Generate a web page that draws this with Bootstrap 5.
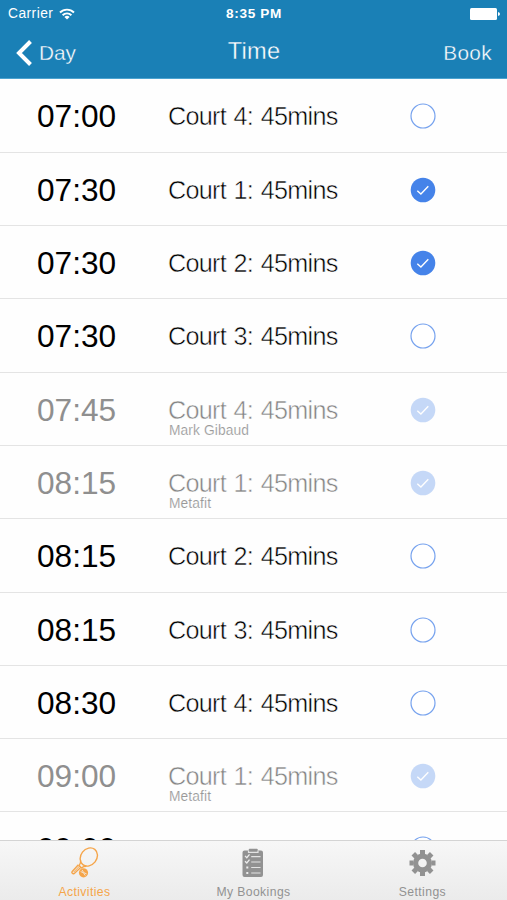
<!DOCTYPE html>
<html lang="en">
<head>
<meta charset="utf-8">
<meta name="viewport" content="width=device-width, initial-scale=1">
<title>Time</title>
<link href="https://cdn.jsdelivr.net/npm/bootstrap@5.3.0/dist/css/bootstrap.min.css" rel="stylesheet">
<style>
  body { font-family: "Liberation Sans", Arial, sans-serif; background: #fefefe; color: #000; }
  .screen { height: 900px; width: 507px; }
  .top { height: 79px; background: #1a80b6; color: #fff; border-bottom: 1px solid #4ba3d0; }
  .status { height: 27px; font-size: 13.8px; line-height: 27px; padding: 0 7px 0 8px; letter-spacing: .45px; }
  .status .clock { font-weight: 700; font-size: 13.6px; letter-spacing: .65px; }
  .wifi { margin-left: 6px; }
  .bar { height: 51px; padding: 0 15px 0 16px; line-height: 51px; font-size: 20.8px; }
  .bar-title { font-size: 23.6px; letter-spacing: .3px; padding-bottom: 2px; line-height: 49px; }
  .bar-back { margin-left: 7px; }
  .bar-book { letter-spacing: .35px; }
  .thin { -webkit-text-stroke: .35px #1a80b6; }
  .slots { min-height: 0; }
  .slot { height: 73.3px; flex: none; border-bottom: 1px solid #e4e4e4; padding-left: 37px; }
  .slot:first-child { height: 73.8px; }
  .slot-time { width: 132px; font-size: 31.6px; line-height: 73px; padding-top: 1px; }
  .slot-info { width: 241px; padding-top: 24px; }
  .slot-name { font-size: 25.2px; line-height: 27px; letter-spacing: -.72px; word-spacing: 1.3px; margin-left: -1px; -webkit-text-stroke: .5px #fefefe; }
  .slot-who { font-size: 13.8px; line-height: 14px; margin-top: 0; letter-spacing: .1px; color: #999; -webkit-text-stroke: .15px #fefefe; }
  .slot-mark { width: 26px; height: 26px; margin-top: 24px; }
  .taken { color: #8f8f8f; }
  .taken .slot-name { color: #848484; }
  .taken .slot-mark { opacity: .3; }
  .tabs { height: 60px; flex: none; border-top: 1px solid #d4d4d4; background: linear-gradient(#f7f7f7, #ebebeb); color: #929292; font-size: 12.2px; line-height: 14px; letter-spacing: .4px; }
  .tabs a { color: inherit; text-decoration: none; width: 33.333%; }
  .tabs a.active { color: #f5a54a; }
  .tabs svg { width: 32px; height: 34px; margin: 6px 0 4px; }
</style>
</head>
<body>
<svg class="d-none">
  <symbol id="off" viewBox="0 0 26 26"><circle cx="13" cy="13" r="12" fill="#fff" stroke="#76a2ee" stroke-width="1.2"/></symbol>
  <symbol id="on" viewBox="0 0 26 26"><circle cx="13" cy="13" r="12.3" fill="#4583e9"/><path d="M7.3 13.7l3.6 3.4 7.4-7.8" fill="none" stroke="#fff" stroke-width="1.4"/></symbol>
</svg>
<div class="screen d-flex flex-column overflow-hidden">
  <header class="top flex-shrink-0">
    <div class="status d-flex align-items-center">
      <div class="col d-flex align-items-center">Carrier
        <svg class="wifi" width="16" height="12" viewBox="0 0 16 12" fill="none" stroke="#fff" stroke-width="1.9"><path d="M1 4.500a10 10 0 0 1 14 0M3.600 7.200a6.300 6.300 0 0 1 8.800 0"/><path d="M8 11.500L5.400 9a3.800 3.800 0 0 1 5.200 0z" fill="#fff" stroke="none"/></svg>
      </div>
      <div class="clock">8:35 PM</div>
      <div class="col d-flex justify-content-end">
        <svg width="30" height="12" viewBox="0 0 30 12" fill="#fff"><rect width="27" height="12" rx="1.5"/><path d="M28 4q2 .5 2 2t-2 2z"/></svg>
      </div>
    </div>
    <nav class="bar d-flex align-items-center">
      <div class="col d-flex align-items-center">
        <svg width="16" height="26" viewBox="0 0 16 26" fill="none" stroke="#fff" stroke-width="4"><path d="M14.500 1.500L3 13l11.500 11.500"/></svg>
        <span class="thin bar-back">Day</span>
      </div>
      <div class="bar-title thin">Time</div>
      <div class="col text-end thin bar-book">Book</div>
    </nav>
  </header>
  <main class="slots flex-grow-1 d-flex flex-column overflow-hidden">
    <div class="slot d-flex"><div class="slot-time">07:00</div><div class="slot-info"><div class="slot-name">Court 4: 45mins</div></div><svg class="slot-mark"><use href="#off"/></svg></div>
    <div class="slot d-flex"><div class="slot-time">07:30</div><div class="slot-info"><div class="slot-name">Court 1: 45mins</div></div><svg class="slot-mark"><use href="#on"/></svg></div>
    <div class="slot d-flex"><div class="slot-time">07:30</div><div class="slot-info"><div class="slot-name">Court 2: 45mins</div></div><svg class="slot-mark"><use href="#on"/></svg></div>
    <div class="slot d-flex"><div class="slot-time">07:30</div><div class="slot-info"><div class="slot-name">Court 3: 45mins</div></div><svg class="slot-mark"><use href="#off"/></svg></div>
    <div class="slot taken d-flex"><div class="slot-time">07:45</div><div class="slot-info"><div class="slot-name">Court 4: 45mins</div><div class="slot-who">Mark Gibaud</div></div><svg class="slot-mark"><use href="#on"/></svg></div>
    <div class="slot taken d-flex"><div class="slot-time">08:15</div><div class="slot-info"><div class="slot-name">Court 1: 45mins</div><div class="slot-who">Metafit</div></div><svg class="slot-mark"><use href="#on"/></svg></div>
    <div class="slot d-flex"><div class="slot-time">08:15</div><div class="slot-info"><div class="slot-name">Court 2: 45mins</div></div><svg class="slot-mark"><use href="#off"/></svg></div>
    <div class="slot d-flex"><div class="slot-time">08:15</div><div class="slot-info"><div class="slot-name">Court 3: 45mins</div></div><svg class="slot-mark"><use href="#off"/></svg></div>
    <div class="slot d-flex"><div class="slot-time">08:30</div><div class="slot-info"><div class="slot-name">Court 4: 45mins</div></div><svg class="slot-mark"><use href="#off"/></svg></div>
    <div class="slot taken d-flex"><div class="slot-time">09:00</div><div class="slot-info"><div class="slot-name">Court 1: 45mins</div><div class="slot-who">Metafit</div></div><svg class="slot-mark"><use href="#on"/></svg></div>
    <div class="slot d-flex"><div class="slot-time">09:00</div><div class="slot-info"></div><svg class="slot-mark"><use href="#off"/></svg></div>
  </main>
  <footer class="tabs d-flex">
    <a href="#" class="active d-flex flex-column align-items-center">
      <svg viewBox="0 0 32 34" fill="none" stroke="currentColor" stroke-width="1.400"><ellipse cx="20.800" cy="10" rx="8" ry="9.700" transform="rotate(38 20.800 10)"/><path d="M12.700 13.500c.2 2-.4 3.600-1.700 5.100l2.600 2.300c1.500-1.200 3-1.700 4.800-1.600"/><path d="M10.400 17.800l-6.200 6.600q-.8 1 .1 1.900t2 .1l6.600-6.100"/><path d="M5.500 25.200l6.300-6.400" stroke-width="1"/><circle cx="15.500" cy="25.800" r="4.600" fill="currentColor" stroke="none"/><path d="M12.700 24.600q3 .2 4.600 4M14 22.900q1.300 3.500 4.600 4" stroke="#f2f2f2" stroke-width=".8"/></svg>
      <span>Activities</span>
    </a>
    <a href="#" class="d-flex flex-column align-items-center">
      <svg viewBox="0 0 32 34"><path d="M7.500 3.500h4.200V2.700q0-.9 1-.9h7.100q1 0 1 .9v.8H24q2 0 2 2V28q0 2-2 2H7.500q-2 0-2-2V5.500q0-2 2-2z" fill="currentColor"/><path d="M11.500 3.500v1.900h9.500V3.500M14.200 9.700h9.300M14.200 15h9.300M14.200 20.500h9.300M14.200 26h9.300" fill="none" stroke="#e4e4e4" stroke-width="1.200"/><path d="M8 8.900l1.800 1.800 2.700-3.400M8 14.200l1.800 1.800 2.700-3.400" fill="none" stroke="#ededed" stroke-width="1.300"/><path d="M9.300 19.500h2v2h-2zM9.300 25h2v2h-2z" fill="#ededed"/></svg>
      <span>My Bookings</span>
    </a>
    <a href="#" class="d-flex flex-column align-items-center">
      <svg viewBox="0 0 32 34"><g fill="none" stroke="currentColor"><circle cx="16.500" cy="16" r="6.900" stroke-width="5.200"/><path d="M16.500 3v4M16.500 25v4M3.500 16h4M25.500 16h4M7.300 6.800l2.900 2.900M22.800 22.300l2.900 2.900M7.300 25.200l2.900-2.900M22.800 9.700l2.900-2.900" stroke-width="5"/></g></svg>
      <span>Settings</span>
    </a>
  </footer>
</div>
<script src="https://cdn.jsdelivr.net/npm/bootstrap@5.3.0/dist/js/bootstrap.bundle.min.js"></script>
</body>
</html>
